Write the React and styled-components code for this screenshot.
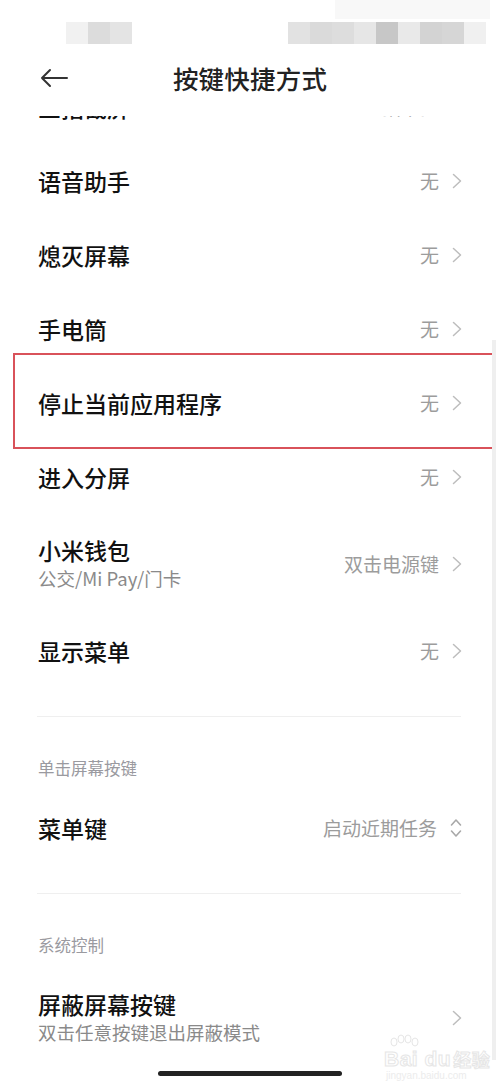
import React from "react";
import styled, { createGlobalStyle } from "styled-components";

const Global = createGlobalStyle`
  html, body { margin: 0; padding: 0; background: #fff; }
  body { font-family: "Noto Sans CJK SC", "Noto Sans", sans-serif; }
  * { box-sizing: border-box; }
`;

const Page = styled.div`
  position: relative;
  width: 500px;
  height: 1084px;
  overflow: hidden;
  background: #fff;
  display: flex;
  flex-direction: column;
`;

const StatusBar = styled.div`
  position: relative;
  height: 56px;
  display: flex;
  align-items: flex-start;
  padding-top: 22px;
`;

const PixelGroup = styled.div`
  display: flex;
  height: 22px;
  margin-left: ${(p) => p.$left}px;
`;

const Pixel = styled.div`
  width: ${(p) => p.$w || 22}px;
  height: 22px;
  background: ${(p) => p.$c};
`;

const TopStrip = styled.div`
  position: absolute;
  top: 0;
  left: 335px;
  width: 155px;
  height: 19px;
  background: #f8f8f8;
`;

const NavBar = styled.div`
  height: 44px;
  margin-bottom: 16px;
  display: grid;
  grid-template-columns: 1fr auto 1fr;
  align-items: center;
`;

const BackButton = styled.div`
  padding-left: 40px;
  display: flex;
  align-items: center;
`;

const Title = styled.div`
  font-size: 25.5px;
  font-weight: 500;
  color: #222;
  line-height: 42px;
  letter-spacing: 0.2px;
`;

const ScrollArea = styled.div`
  flex: 1;
  overflow: hidden;
`;

const List = styled.div`
  margin-top: -46px;
  display: flex;
  flex-direction: column;
`;

const Row = styled.div`
  position: relative;
  height: ${(p) => (p.$tall ? 100 : 74)}px;
  padding: 0 38px;
  display: flex;
  align-items: center;
  justify-content: space-between;
`;

const TextBlock = styled.div`
  display: flex;
  flex-direction: column;
`;

const Label = styled.div`
  font-size: 23px;
  font-weight: 500;
  color: #111;
  line-height: 28px;
`;

const Sub = styled.div`
  font-size: 18.5px;
  color: #8a8a8a;
  line-height: 28px;
`;

const Trail = styled.div`
  display: flex;
  align-items: center;
  gap: 13px;
`;

const Value = styled.div`
  font-size: 19px;
  color: #9c9c9c;
  line-height: 28px;
`;

const Divider = styled.div`
  height: 1px;
  background: #efefef;
  margin: 28px 39px 0 37px;
`;

const SectionHeader = styled.div`
  font-size: 16.5px;
  color: #9a9aa0;
  line-height: 24px;
  padding: 39px 38px 11px;
`;

const Highlight = styled.div`
  position: absolute;
  left: 13px;
  right: 6px;
  top: -13px;
  bottom: -9px;
  border: 2px solid #d9525a;
  pointer-events: none;
`;

const ScrollBar = styled.div`
  position: absolute;
  right: 4px;
  top: 340px;
  width: 4px;
  height: 720px;
  background: #efefef;
`;

const HomeIndicator = styled.div`
  position: absolute;
  left: 158px;
  bottom: 8px;
  width: 184px;
  height: 5px;
  border-radius: 3px;
  background: #222;
`;

const Watermark = styled.div`
  position: absolute;
  left: 384px;
  top: 1034px;
  display: flex;
  flex-direction: column;
  align-items: flex-start;
  font-family: "Liberation Sans", sans-serif;
`;

const WmMain = styled.div`
  display: flex;
  align-items: flex-end;
  font-size: 21px;
  font-weight: 700;
  line-height: 22px;
  letter-spacing: 0.5px;
  -webkit-text-stroke: 1px #e6e6e6;
  color: #fff;
`;

const WmCn = styled.span`
  font-family: "Noto Sans CJK SC", sans-serif;
  font-size: 18px;
  margin-left: 2px;
`;

const WmUrl = styled.div`
  font-size: 10px;
  color: #ececec;
  line-height: 12px;
  margin-left: 2px;
`;

const Chevron = () => (
  <svg width="10" height="16" viewBox="0 0 10 16">
    <path d="M1.5 1.5 L8.5 8 L1.5 14.5" fill="none" stroke="#bdbdbd" strokeWidth="1.5" strokeLinecap="round" strokeLinejoin="round" />
  </svg>
);

const UpDown = () => (
  <svg width="12" height="20" viewBox="0 0 12 20">
    <path d="M1.5 7 L6 2 L10.5 7 M1.5 13 L6 18 L10.5 13" fill="none" stroke="#a8a8a8" strokeWidth="1.6" strokeLinecap="round" strokeLinejoin="round" />
  </svg>
);

const BackArrow = () => (
  <svg width="28" height="20" viewBox="0 0 28 20">
    <path d="M2 10 H27 M10 2 L2 10 L10 18" fill="none" stroke="#333" strokeWidth="2" strokeLinecap="round" strokeLinejoin="round" />
  </svg>
);

const Paw = () => (
  <svg width="36" height="14" viewBox="0 0 36 14">
    <g fill="none" stroke="#e6e6e6" strokeWidth="1">
      <ellipse cx="10" cy="8" rx="3" ry="4" />
      <ellipse cx="17" cy="5" rx="3" ry="4" />
      <ellipse cx="24" cy="5" rx="3" ry="4" />
      <ellipse cx="31" cy="8" rx="3" ry="4" />
    </g>
  </svg>
);

const leftPixels = ["#f1f1f1", "#dcdcdc", "#e4e4e4"];
const rightPixels = ["#e2e2e2", "#dadada", "#dddddd", "#e6e6e6", "#c7c7c7", "#e9e9e9", "#d3d3d3", "#d6d6d6", "#f0f0f0"];

const SettingRow = ({ label, sub, value, icon = "chevron", tall, highlight }) => (
  <Row $tall={tall}>
    <TextBlock>
      <Label>{label}</Label>
      {sub && <Sub>{sub}</Sub>}
    </TextBlock>
    <Trail>
      {value && <Value>{value}</Value>}
      {icon === "updown" ? <UpDown /> : <Chevron />}
    </Trail>
    {highlight && <Highlight />}
  </Row>
);

export default function App() {
  return (
    <Page>
      <Global />
      <StatusBar>
        <TopStrip />
        <PixelGroup $left={66}>
          {leftPixels.map((c, i) => (
            <Pixel key={i} $c={c} />
          ))}
        </PixelGroup>
        <PixelGroup $left={156}>
          {rightPixels.map((c, i) => (
            <Pixel key={i} $c={c} />
          ))}
        </PixelGroup>
      </StatusBar>
      <NavBar>
        <BackButton>
          <BackArrow />
        </BackButton>
        <Title>按键快捷方式</Title>
        <div />
      </NavBar>
      <ScrollArea>
        <List>
          <SettingRow label="三指截屏" value="三指下拉" />
          <SettingRow label="语音助手" value="无" />
          <SettingRow label="熄灭屏幕" value="无" />
          <SettingRow label="手电筒" value="无" />
          <SettingRow label="停止当前应用程序" value="无" highlight />
          <SettingRow label="进入分屏" value="无" />
          <SettingRow label="小米钱包" sub="公交/Mi Pay/门卡" value="双击电源键" tall />
          <SettingRow label="显示菜单" value="无" />
          <Divider />
          <SectionHeader>单击屏幕按键</SectionHeader>
          <SettingRow label="菜单键" value="启动近期任务" icon="updown" />
          <Divider />
          <SectionHeader>系统控制</SectionHeader>
          <SettingRow label="屏蔽屏幕按键" sub="双击任意按键退出屏蔽模式" tall />
        </List>
      </ScrollArea>
      <ScrollBar />
      <Watermark>
        <Paw />
        <WmMain>
          Bai du<WmCn>经验</WmCn>
        </WmMain>
        <WmUrl>jingyan.baidu.com</WmUrl>
      </Watermark>
      <HomeIndicator />
    </Page>
  );
}
